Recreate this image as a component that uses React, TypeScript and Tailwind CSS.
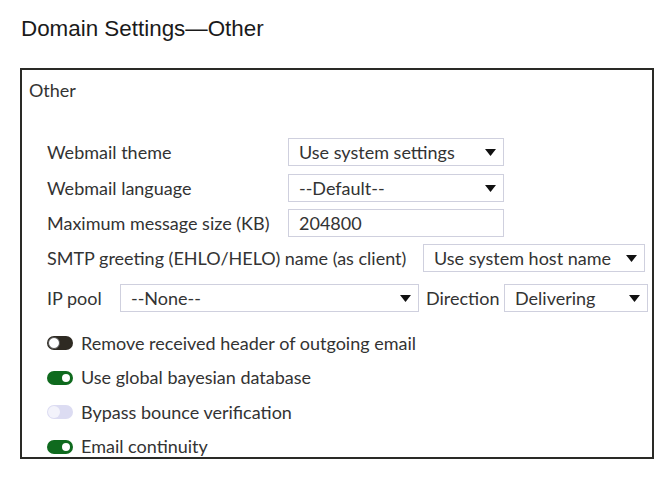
import React from 'react';

const Caret: React.FC = () => (
  <svg width="11" height="7" viewBox="0 0 11 7" className="shrink-0">
    <path d="M0 0 H11 L5.5 7 Z" fill="#111" />
  </svg>
);

const Select: React.FC<{ value: string; className: string }> = ({ value, className }) => (
  <div
    className={`flex h-[28px] items-center justify-between border border-[#cfd0de] bg-white pl-[10px] pr-[7px] ${className}`}
  >
    <span className="whitespace-nowrap">{value}</span>
    <Caret />
  </div>
);

type ToggleState = 'off' | 'on' | 'disabled';

const Toggle: React.FC<{ state: ToggleState }> = ({ state }) => {
  if (state === 'on') {
    return (
      <div className="flex h-[14px] w-[26px] shrink-0 items-center justify-end rounded-full bg-[#0f6a1e] pr-[1px]">
        <div className="h-[12px] w-[12px] rounded-full border-2 border-[#0f6a1e] bg-white" />
      </div>
    );
  }
  if (state === 'disabled') {
    return (
      <div className="flex h-[14px] w-[26px] shrink-0 items-center rounded-full bg-[#dcdcf2] pl-[1px]">
        <div className="h-[12px] w-[12px] rounded-full bg-[#f3f3fb]" />
      </div>
    );
  }
  return (
    <div className="flex h-[14px] w-[26px] shrink-0 items-center rounded-full bg-[#2e2a22] pl-[1px]">
      <div className="h-[12px] w-[12px] rounded-full border border-[#555] bg-white" />
    </div>
  );
};

const toggles: { label: string; state: ToggleState }[] = [
  { label: 'Remove received header of outgoing email', state: 'off' },
  { label: 'Use global bayesian database', state: 'on' },
  { label: 'Bypass bounce verification', state: 'disabled' },
  { label: 'Email continuity', state: 'on' },
];

export default function App() {
  return (
    <div className="h-[483px] w-[668px] overflow-hidden bg-white">
      <h1 className="pl-[21px] pt-[15px] font-['Liberation_Sans',Arial,sans-serif] text-[22.4px] leading-[28px] text-[#1a1a1a]">
        Domain Settings—Other
      </h1>

      <div className="ml-[20px] mt-[25px] h-[391px] w-[634px] border-2 border-[#2a2a26] font-['Lato',sans-serif] text-[18px] text-[#333]">
        <div className="pl-[7px] pt-[9px] leading-[22px]">Other</div>

        <div className="mt-[37px] flex flex-col pl-[25px]">
          <div className="flex h-[28px] items-center">
            <span className="w-[241px]">Webmail theme</span>
            <Select value="Use system settings" className="w-[216px]" />
          </div>
          <div className="mt-[8px] flex h-[28px] items-center">
            <span className="w-[241px]">Webmail language</span>
            <Select value="--Default--" className="w-[216px]" />
          </div>
          <div className="mt-[7px] flex h-[28px] items-center">
            <span className="w-[241px]">Maximum message size (KB)</span>
            <div className="flex h-[28px] w-[216px] items-center border border-[#cfd0de] bg-white pl-[10px]">
              204800
            </div>
          </div>
          <div className="mt-[7px] flex h-[28px] items-center">
            <span className="w-[376px] whitespace-nowrap">SMTP greeting (EHLO/HELO) name (as client)</span>
            <Select value="Use system host name" className="w-[222px]" />
          </div>
          <div className="mt-[12px] flex h-[28px] items-center">
            <span className="w-[73px]">IP pool</span>
            <Select value="--None--" className="w-[299px]" />
            <span className="ml-[7px] w-[78px] whitespace-nowrap">Direction</span>
            <Select value="Delivering" className="w-[144px]" />
          </div>

          <div className="mt-[14px] flex flex-col">
            {toggles.map((t) => (
              <div key={t.label} className="flex h-[34.5px] items-center gap-[8px]">
                <Toggle state={t.state} />
                <span className="whitespace-nowrap">{t.label}</span>
              </div>
            ))}
          </div>
        </div>
      </div>
    </div>
  );
}
